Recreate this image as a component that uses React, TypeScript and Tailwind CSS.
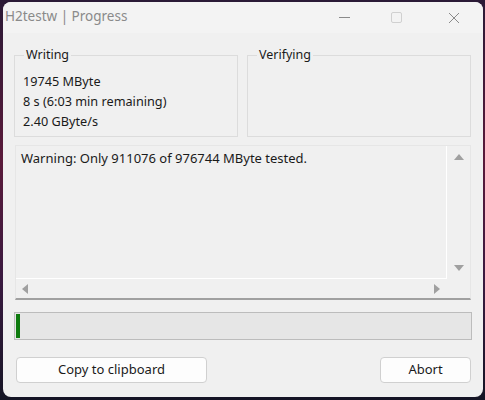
import React from "react";

export default function App() {
  const font = { fontFamily: '"Noto Sans", "Open Sans", sans-serif' };
  return (
    <div className="w-[485px] h-[400px] bg-[linear-gradient(180deg,#2a1a36_0%,#5a1a3a_40%,#3a1a40_70%,#151525_100%)] pt-[2px] pl-[3px] pr-[2px] pb-[3px]" style={font}>
      <div className="w-[480px] h-[395px] bg-[#f0f0f0] rounded-[8px] flex flex-col">
        {/* title bar */}
        <div className="h-[31px] flex items-center bg-[#f3f3f3] rounded-t-[8px]">
          <div className="pl-[2px] text-[13.5px] text-[#8a8a8a] flex-1 leading-none pb-[2px]">H2testw | Progress</div>
          <div className="flex items-center h-full">
            <div className="w-[46px] h-full flex items-center justify-center">
              <div className="w-[11px] h-[1px] bg-[#8a8a8a]" />
            </div>
            <div className="w-[58px] h-full flex items-center justify-center">
              <div className="w-[11px] h-[11px] border border-[#d0d0d0] rounded-[2px]" />
            </div>
            <div className="w-[58px] h-full flex items-center justify-center">
              <svg width="12" height="12" viewBox="0 0 12 12">
                <path d="M1 1 L11 11 M11 1 L1 11" stroke="#8a8a8a" strokeWidth="1" />
              </svg>
            </div>
          </div>
        </div>
        <div className="flex flex-col px-[11px] pt-[15px]">
          <div className="flex gap-[9px]">
            <fieldset className="w-[224px] h-[89px] border border-[#dcdcdc] px-[8px] pt-[6px] m-0">
              <legend className="text-[12.5px] text-[#1a1a1a] px-[2px] ml-[1px] leading-[14px]">Writing</legend>
              <div className="text-[12.7px] text-[#1a1a1a] leading-[20px] pt-[3px]">
                <div>19745 MByte</div>
                <div>8 s (6:03 min remaining)</div>
                <div>2.40 GByte/s</div>
              </div>
            </fieldset>
            <fieldset className="w-[224px] h-[89px] border border-[#dcdcdc] px-[8px] m-0">
              <legend className="text-[12.5px] text-[#1a1a1a] px-[2px] ml-[1px] leading-[14px]">Verifying</legend>
            </fieldset>
          </div>
          <div className="mt-[8px] ml-[1px] w-[456px] h-[155px] border border-[#e6e6e6] border-b-[#a0a0a0] border-b-2 flex flex-col">
            <div className="flex flex-1">
              <div className="flex-1 border-r border-b border-white px-[5px] pt-[4px] text-[13px] text-[#1a1a1a] leading-[16px]">
                Warning: Only 911076 of 976744 MByte tested.
              </div>
              <div className="w-[23px] flex flex-col items-center justify-between py-[8px]">
                <svg width="10" height="6" viewBox="0 0 10 6"><path d="M0 6 L5 0 L10 6 Z" fill="#a0a0a0" /></svg>
                <svg width="10" height="6" viewBox="0 0 10 6"><path d="M0 0 L5 6 L10 0 Z" fill="#a0a0a0" /></svg>
              </div>
            </div>
            <div className="h-[19px] flex items-center justify-between pl-[6px] pr-[30px]">
              <svg width="6" height="10" viewBox="0 0 6 10"><path d="M6 0 L0 5 L6 10 Z" fill="#a0a0a0" /></svg>
              <svg width="6" height="10" viewBox="0 0 6 10"><path d="M0 0 L6 5 L0 10 Z" fill="#a0a0a0" /></svg>
            </div>
          </div>
          <div className="mt-[12px] w-[458px] h-[28px] border border-[#bcbcbc] bg-[#e6e6e6] p-px">
            <div className="w-[4px] h-full bg-[#0e7a0e]" />
          </div>
          <div className="mt-[17px] flex justify-between pl-[2px] pr-[1px]">
            <button className="w-[191px] h-[26px] bg-[#fdfdfd] border border-[#d0d0d0] rounded-[4px] text-[13px] text-[#1a1a1a]">Copy to clipboard</button>
            <button className="w-[91px] h-[26px] bg-[#fdfdfd] border border-[#d0d0d0] rounded-[4px] text-[13px] text-[#1a1a1a]">Abort</button>
          </div>
        </div>
      </div>
    </div>
  );
}
